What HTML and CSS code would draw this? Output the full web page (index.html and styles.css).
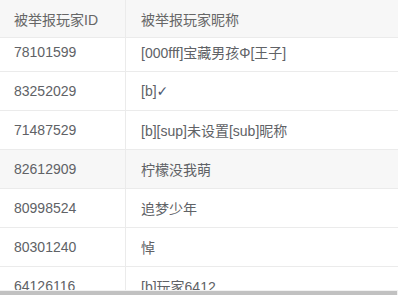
FILE: index.html
```html
<!DOCTYPE html>
<html lang="zh-CN">
<head>
<meta charset="utf-8">
<title>举报列表</title>
<link rel="stylesheet" href="styles.css">
</head>
<body>
<div class="table">
  <div class="viewport">
    <div class="row head">
      <div class="cell c1">被举报玩家ID</div>
      <div class="cell c2">被举报玩家昵称</div>
    </div>
    <div class="body">
      <div class="row"><div class="cell c1">78101599</div><div class="cell c2">[000fff]宝藏男孩Φ[王子]</div></div>
      <div class="row"><div class="cell c1">83252029</div><div class="cell c2">[b]<span class="check">✓</span></div></div>
      <div class="row"><div class="cell c1">71487529</div><div class="cell c2">[b][sup]未设置[sub]昵称</div></div>
      <div class="row stripe"><div class="cell c1">82612909</div><div class="cell c2">柠檬没我萌</div></div>
      <div class="row"><div class="cell c1">80998524</div><div class="cell c2">追梦少年</div></div>
      <div class="row"><div class="cell c1">80301240</div><div class="cell c2">悼</div></div>
      <div class="row"><div class="cell c1">64126116</div><div class="cell c2">[b]玩家6412</div></div>
    </div>
  </div>
  <div class="hscroll"><div class="thumb"></div></div>
</div>
</body>
</html>
```
FILE: styles.css
```css
html, body {
  margin: 0;
  padding: 0;
  background: #fff;
}
.table {
  width: 398px;
  height: 295px;
  display: flex;
  flex-direction: column;
  font-family: "Liberation Sans", "Noto Sans CJK SC", sans-serif;
  font-size: 14px;
  color: #606266;
}
.viewport {
  height: 290px;
  overflow: hidden;
}
.row {
  display: grid;
  grid-template-columns: 126px 1fr;
  height: 39px;
  box-sizing: border-box;
  border-bottom: 1px solid #ebebeb;
  background: #fff;
}
.row.head {
  height: 38px;
  background: #f7f7f7;
  position: relative;
  z-index: 1;
  color: #666;
}
.row.stripe {
  background: #f7f7f7;
}
.body {
  margin-top: -5px;
}
.cell {
  display: flex;
  align-items: center;
  white-space: nowrap;
  box-sizing: border-box;
}
.c1 {
  padding-left: 14px;
  border-right: 1px solid #ebebeb;
}
.c2 {
  padding-left: 15px;
}
.check {
  font-family: "DejaVu Sans", sans-serif;
  color: #4a5870;
  font-weight: bold;
}
.hscroll {
  height: 5px;
  background: #f1f1f1;
  display: flex;
  flex-direction: column;
}
.thumb {
  margin-top: 1px;
  height: 4px;
  margin-right: 1px;
  background: #c1c1c1;
}
```
